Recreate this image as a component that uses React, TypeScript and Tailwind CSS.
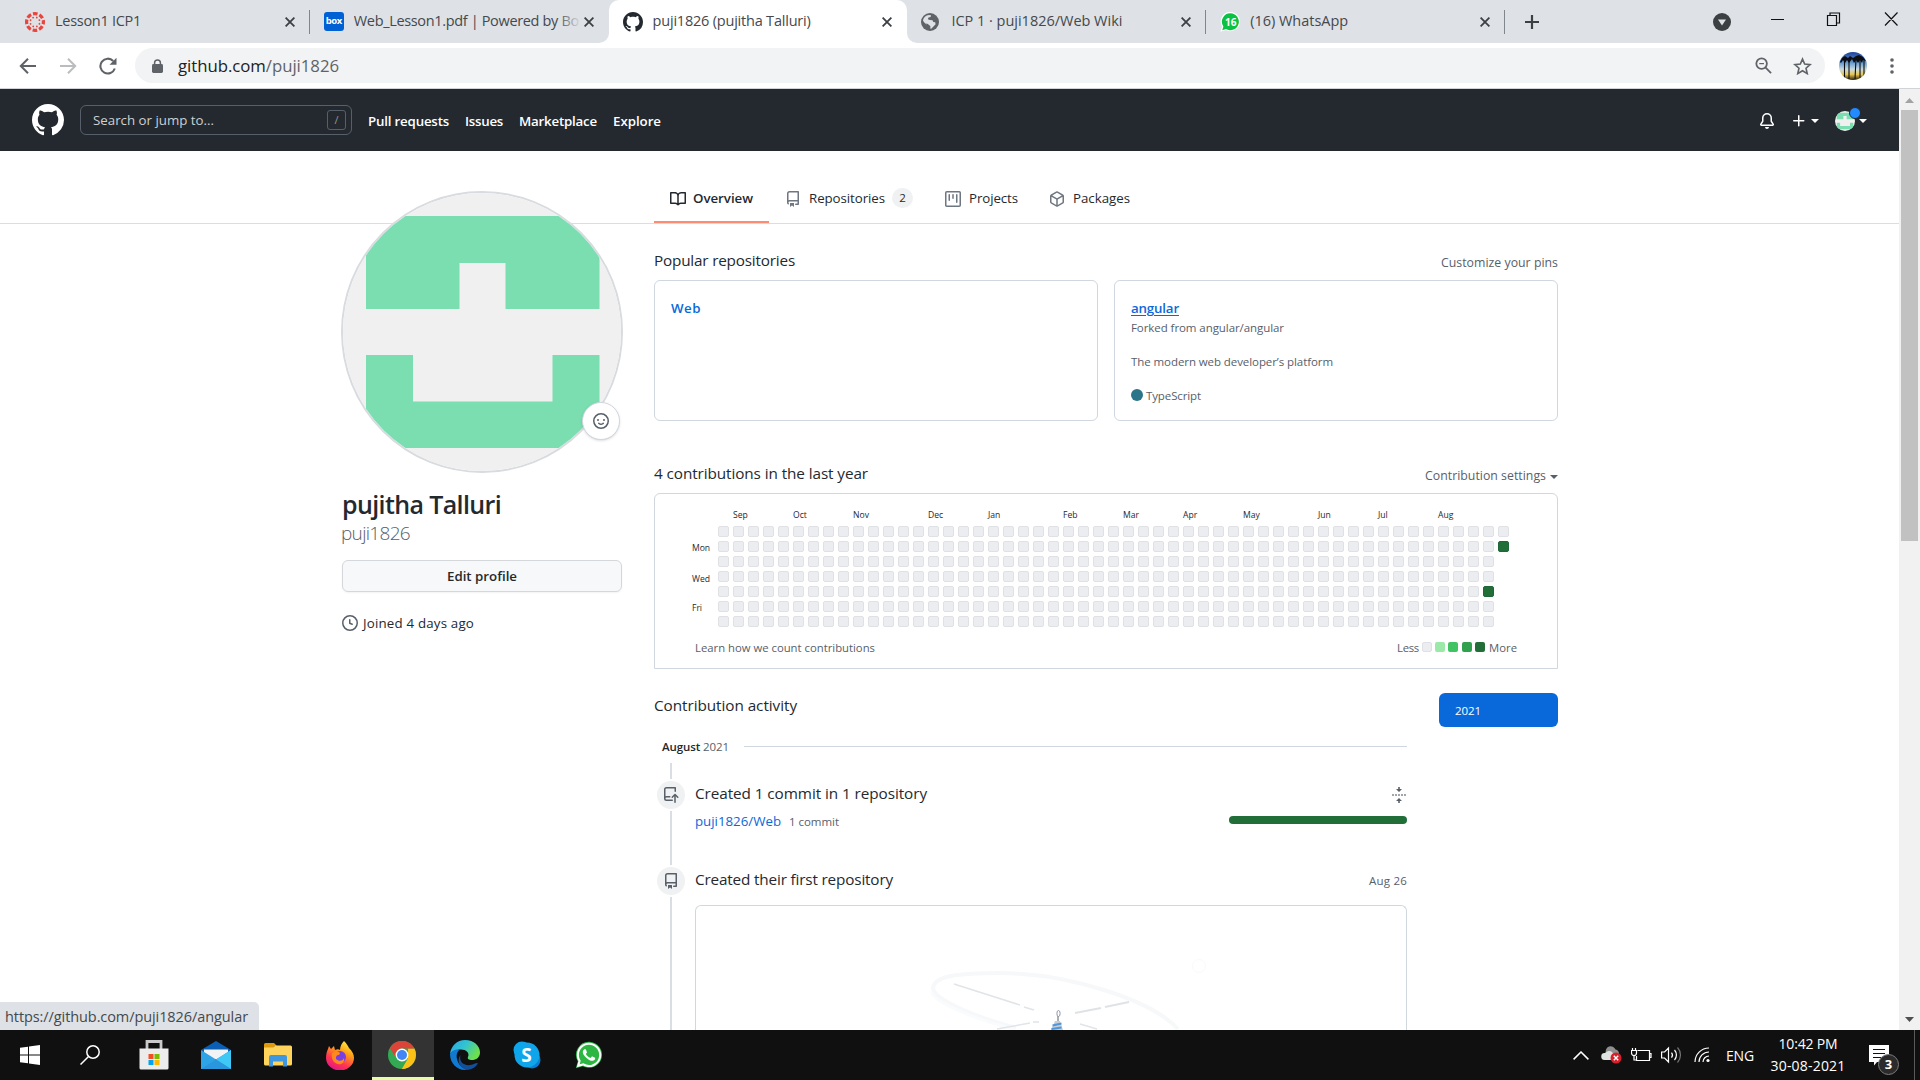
import { useLayoutEffect, useRef, type ReactNode } from "react";
import { FaWhatsapp } from "react-icons/fa";

/** Text that spreads its letters evenly over the width given by its classes. */
function T({ children, className = "" }: { children: ReactNode; className?: string }) {
  const box = useRef<HTMLSpanElement>(null);
  const inner = useRef<HTMLSpanElement>(null);
  useLayoutEffect(() => {
    const b = box.current;
    const i = inner.current;
    if (!b || !i) return;
    i.style.letterSpacing = "0px";
    const n = (i.textContent ?? "").length;
    const diff = b.getBoundingClientRect().width - i.getBoundingClientRect().width;
    i.style.letterSpacing = `${diff / n}px`;
  });
  return (
    <span ref={box} className={`inline-block shrink-0 whitespace-nowrap ${className}`}>
      <span ref={inner}>{children}</span>
    </span>
  );
}

const paths = {
  mark: "M8 0C3.58 0 0 3.58 0 8c0 3.54 2.29 6.53 5.47 7.59.4.07.55-.17.55-.38 0-.19-.01-.82-.01-1.49-2.01.37-2.53-.49-2.69-.94-.09-.23-.48-.94-.82-1.13-.28-.15-.68-.52-.01-.53.63-.01 1.08.58 1.23.82.72 1.21 1.87.87 2.33.66.07-.52.28-.87.51-1.07-1.78-.2-3.64-.89-3.64-3.95 0-.87.31-1.59.82-2.15-.08-.2-.36-1.02.08-2.12 0 0 .67-.21 2.2.82.64-.18 1.32-.27 2-.27.68 0 1.36.09 2 .27 1.53-1.04 2.2-.82 2.2-.82.44 1.1.16 1.92.08 2.12.51.56.82 1.27.82 2.15 0 3.07-1.87 3.75-3.65 3.95.29.25.54.73.54 1.48 0 1.07-.01 1.93-.01 2.2 0 .21.15.46.55.38A8.013 8.013 0 0016 8c0-4.42-3.58-8-8-8z",
  repo: "M2 2.5A2.5 2.5 0 014.5 0h8.75a.75.75 0 01.75.75v12.5a.75.75 0 01-.75.75h-2.5a.75.75 0 110-1.5h1.75v-2h-8a1 1 0 00-.714 1.7.75.75 0 01-1.072 1.05A2.495 2.495 0 012 11.5v-9zm10.5-1V9h-8c-.356 0-.694.074-1 .208V2.5a1 1 0 011-1h8zM5 12.25v3.25a.25.25 0 00.4.2l1.45-1.087a.25.25 0 01.3 0L8.6 15.7a.25.25 0 00.4-.2v-3.25a.25.25 0 00-.25-.25h-3.5a.25.25 0 00-.25.25z",
  book: "M0 1.75A.75.75 0 01.75 1h4.253c1.227 0 2.317.59 3 1.501A3.744 3.744 0 0111.006 1h4.245a.75.75 0 01.75.75v10.5a.75.75 0 01-.75.75h-4.507a2.25 2.25 0 00-1.591.659l-.622.621a.75.75 0 01-1.06 0l-.622-.621A2.25 2.25 0 005.258 13H.75a.75.75 0 01-.75-.75V1.75zm8.755 3a2.25 2.25 0 012.25-2.25H14.5v9h-3.757c-.71 0-1.4.201-1.992.572l.004-7.322zm-1.504 7.324l.004-5.073-.002-2.253A2.25 2.25 0 005.003 2.5H1.5v9h3.757a3.75 3.75 0 011.994.574z",
  project: "M1.75 0A1.75 1.75 0 000 1.75v12.5C0 15.216.784 16 1.75 16h12.5A1.75 1.75 0 0016 14.25V1.75A1.75 1.75 0 0014.25 0H1.75zM1.5 1.75a.25.25 0 01.25-.25h12.5a.25.25 0 01.25.25v12.5a.25.25 0 01-.25.25H1.75a.25.25 0 01-.25-.25V1.75zM11.75 3a.75.75 0 00-.75.75v7.5a.75.75 0 001.5 0v-7.5a.75.75 0 00-.75-.75zm-8.25.75a.75.75 0 011.5 0v5.5a.75.75 0 01-1.5 0v-5.5zM8 3a.75.75 0 00-.75.75v3.5a.75.75 0 001.5 0v-3.5A.75.75 0 008 3z",
  pkg: "M8.878.392a1.75 1.75 0 00-1.756 0l-5.25 3.045A1.75 1.75 0 001 4.951v6.098c0 .624.332 1.2.872 1.514l5.25 3.045a1.75 1.75 0 001.756 0l5.25-3.045c.54-.313.872-.89.872-1.514V4.951c0-.624-.332-1.2-.872-1.514L8.878.392zM7.875 1.69a.25.25 0 01.25 0l4.63 2.685L8 7.133 3.245 4.375l4.63-2.685zM2.5 5.677v5.372c0 .09.047.171.125.216l4.625 2.683V8.432L2.5 5.677zm6.25 8.271l4.625-2.683a.25.25 0 00.125-.216V5.677L8.75 8.432v5.516z",
  smiley: "M1.5 8a6.5 6.5 0 1113 0 6.5 6.5 0 01-13 0zM8 0a8 8 0 100 16A8 8 0 008 0zM5 8a1 1 0 100-2 1 1 0 000 2zm7-1a1 1 0 11-2 0 1 1 0 012 0zM5.32 9.636a.75.75 0 011.038.175l.007.009c.103.118.22.222.35.31.264.178.683.37 1.285.37.602 0 1.02-.192 1.285-.371.13-.088.247-.192.35-.31l.007-.008a.75.75 0 111.222.87l-.614-.431c.614.43.614.431.613.431v.001l-.001.002-.002.003-.005.007-.014.019a1.984 1.984 0 01-.184.213c-.16.166-.338.316-.53.445-.63.418-1.37.638-2.127.629-.946 0-1.652-.308-2.126-.63a3.331 3.331 0 01-.715-.657l-.014-.02-.005-.006-.002-.003v-.002h-.001l.613-.432-.614.43a.75.75 0 01.183-1.044h.001z",
  clock: "M1.5 8a6.5 6.5 0 1113 0 6.5 6.5 0 01-13 0zM8 0a8 8 0 100 16A8 8 0 008 0zm.5 4.75a.75.75 0 00-1.5 0v3.5a.75.75 0 00.471.696l2.5 1a.75.75 0 00.557-1.392L8.5 7.742V4.75z",
  bell: "M8 16a2 2 0 001.985-1.75c.017-.137-.097-.25-.235-.25h-3.5c-.138 0-.252.113-.235.25A2 2 0 008 16zM8 1.5A3.5 3.5 0 004.5 5v2.947c0 .346-.102.683-.294.97l-1.703 2.556a.018.018 0 00-.003.01l.001.006c0 .002.002.004.004.006a.017.017 0 00.006.004l.007.001h10.964l.007-.001a.016.016 0 00.006-.004.016.016 0 00.004-.006l.001-.007a.017.017 0 00-.003-.01l-1.703-2.554a1.75 1.75 0 01-.294-.97V5A3.5 3.5 0 008 1.5zM3 5a5 5 0 0110 0v2.947c0 .05.015.098.042.139l1.703 2.555A1.518 1.518 0 0113.482 13H2.518a1.518 1.518 0 01-1.263-2.36l1.703-2.554A.25.25 0 003 7.947V5z",
  plus: "M7.75 2a.75.75 0 01.75.75V7h4.25a.75.75 0 110 1.5H8.5v4.25a.75.75 0 11-1.5 0V8.5H2.75a.75.75 0 010-1.5H7V2.75A.75.75 0 017.75 2z",
  push: "M1 2.5A2.5 2.5 0 013.5 0h8.75a.75.75 0 01.75.75v3.5a.75.75 0 01-1.5 0V1.5h-8a1 1 0 00-1 1v6.708A2.492 2.492 0 013.5 9h3.25a.75.75 0 010 1.5H3.5a1 1 0 100 2h5.75a.75.75 0 010 1.5H3.5A2.5 2.5 0 011 11.5v-9zM12 16a.75.75 0 01-.75-.75V9.31L9.78 10.78a.75.75 0 01-1.06-1.06l2.75-2.75a.75.75 0 011.06 0l2.75 2.75a.75.75 0 11-1.06 1.06L12.75 9.31v5.94A.75.75 0 0112 16z",
};

function Oct({ d, className = "" }: { d: string; className?: string }) {
  return (
    <svg viewBox="0 0 16 16" fill="currentColor" fillRule="evenodd" className={`h-4 w-4 shrink-0 ${className}`}>
      <path d={d} />
    </svg>
  );
}

function Caret({ className = "" }: { className?: string }) {
  return (
    <svg viewBox="0 0 8 4" fill="currentColor" className={`h-1 w-2 shrink-0 ${className}`}>
      <path d="M0 0h8L4 4z" />
    </svg>
  );
}

/* ---------- Browser chrome ---------- */

const CloseX = () => (
  <svg viewBox="0 0 10 10" className="h-[10px] w-[10px] shrink-0" stroke="#3c4043" strokeWidth="1.8">
    <path d="M.6.6l8.8 8.8M9.4.6L.6 9.4" />
  </svg>
);

const CanvasIcon = () => (
  <svg viewBox="0 0 20 20" className="h-5 w-5 shrink-0" fill="none">
    <circle cx="10" cy="10" r="8.4" stroke="#e8453c" strokeWidth="3.2" strokeDasharray="4.6 2" strokeDashoffset="2.3" />
    {[0, 45, 90, 135, 180, 225, 270, 315].map((a) => (
      <circle key={a} cx="10" cy="5.2" r=".9" fill="#e8453c" transform={`rotate(${a + 22} 10 10)`} />
    ))}
  </svg>
);

const BoxIcon = () => (
  <span className="flex h-[19px] w-5 shrink-0 items-center justify-center rounded-[3px] bg-[#0061d5] pb-[1px] font-['Open_Sans',sans-serif] text-[9.5px] leading-none font-bold tracking-[-0.5px] text-white">
    box
  </span>
);

const GlobeIcon = () => (
  <svg viewBox="0 0 18 18" className="h-[18px] w-[18px] shrink-0">
    <circle cx="9" cy="9" r="9" fill="#5f6368" />
    <path d="M2 7.5C2.4 4.500 5 2 8 1.900L10 2.300 9.600 4 7.500 4.600 6.800 6.300 9 7l2.500.3.800 1.600 1.900.4.400 2L12 14l-1.800 1.800-1-.3.300-2.100-1.600-1.700-2.300-.2L3 9.300z" fill="#dee1e6" />
    <path d="M12.500 3.200l1.500 1-.4 1.500-1.700-.5zM5 10.500l2 .4.700 1.900-1 .7z" fill="#5f6368" />
  </svg>
);

const WaTabIcon = () => (
  <span className="relative flex h-5 w-5 shrink-0 items-center justify-center">
    <svg viewBox="0 0 20 20" className="absolute inset-0 h-5 w-5">
      <path d="M10.500 0a9.600 9.600 0 11-4.600 18.100L.4 19.800l1.700-5.200A9.600 9.600 0 0110.500 0z" fill="#fff" />
      <path d="M10.500 1.200A8.500 8.500 0 116 17l-3.800 1.200 1.200-3.700A8.500 8.500 0 0110.500 1.200z" fill="#0bc144" />
    </svg>
    <span className="relative pl-[1px] text-[10px] leading-none font-bold text-white">16</span>
  </span>
);

function TabCorner({ flip = false }: { flip?: boolean }) {
  return (
    <svg viewBox="0 0 10 10" className={`absolute bottom-0 h-[10px] w-[10px] ${flip ? "-right-[10px] -scale-x-100" : "-left-[10px]"}`}>
      <path d="M10 0v10H0A10 10 0 0010 0z" fill="#fff" />
    </svg>
  );
}

function Tab({ icon, children, active = false, sep = false, fade = false }: { icon: ReactNode; children: ReactNode; active?: boolean; sep?: boolean; fade?: boolean }) {
  return (
    <div className={`relative flex h-[43px] w-[298.800px] shrink-0 items-center pr-[15px] pl-[14px] ${active ? "rounded-t-[10px] bg-white" : ""}`}>
      {active && <TabCorner />}
      {active && <TabCorner flip />}
      <span className="mr-[10px] flex w-5">{icon}</span>
      <span className="relative mb-[2px] flex min-w-0 flex-1 overflow-hidden">
        {children}
        {fade && <span className="absolute top-0 right-0 h-full w-6 bg-linear-to-r from-transparent to-[#dee1e6]" />}
      </span>
      <span className="ml-[3px] flex">
        <CloseX />
      </span>
      {sep && <span className="absolute top-[10px] right-0 h-6 w-px bg-[#80868b]" />}
    </div>
  );
}

function TabStrip() {
  return (
    <div className="flex h-[43px] items-center bg-[#dee1e6] pl-[11px] text-[14.500px] text-[#45494d]">
      <Tab icon={<CanvasIcon />} sep>
        <T className="w-[86px]">Lesson1 ICP1</T>
      </Tab>
      <Tab icon={<BoxIcon />} fade>
        <T className="w-[225px]">Web_Lesson1.pdf | Powered by Bo</T>
      </Tab>
      <Tab icon={<Oct d={paths.mark} className="!h-5 !w-5 text-[#24292f]" />} active>
        <T className="w-[158px]">puji1826 (pujitha Talluri)</T>
      </Tab>
      <Tab icon={<GlobeIcon />} sep>
        <T className="w-[171px]">ICP 1 · puji1826/Web Wiki</T>
      </Tab>
      <Tab icon={<WaTabIcon />} sep>
        <T className="w-[98px]">(16) WhatsApp</T>
      </Tab>
      <svg viewBox="0 0 14 14" className="ml-[20px] h-[14px] w-[14px]" stroke="#3c4043" strokeWidth="2.200">
        <path d="M7 0v14M0 7h14" />
      </svg>
      <svg viewBox="0 0 18 18" className="mr-[40px] ml-auto h-[18px] w-[18px]">
        <circle cx="9" cy="9" r="9" fill="#3c4043" />
        <path d="M5 6.500h8L9 12.500z" fill="#dee1e6" />
      </svg>
      <svg viewBox="0 0 127 14" className="mr-[22px] mb-[6px] h-[14px] w-[127px]" fill="none" stroke="#111" strokeWidth="1.200">
        <path d="M0 7.500h13M56.500 3.500h9v10h-9zM59 3.500v-2.500h9.500v10H66M114 .5l12.500 13M126.500.5L114 13.500" />
      </svg>
    </div>
  );
}

function Toolbar() {
  return (
    <div className="flex h-[46px] items-center border-b border-[#d0d3d7] bg-white pl-[19px]">
      <svg viewBox="0 0 18 16" className="h-4 w-[18px]" fill="none" stroke="#5f6368" strokeWidth="2">
        <path d="M17 8H2M9 .8L1.800 8 9 15.200" />
      </svg>
      <svg viewBox="0 0 18 16" className="ml-[22px] h-4 w-[18px]" fill="none" stroke="#babcbe" strokeWidth="2">
        <path d="M1 8h15M9 .8L16.200 8 9 15.200" />
      </svg>
      <svg viewBox="0 0 18 18" className="ml-[22px] h-[18px] w-[18px]" fill="none" stroke="#5f6368" strokeWidth="2.100">
        <path d="M15.800 11.500A7.400 7.400 0 1114.200 4" />
        <path d="M17.500.8v7h-7z" fill="#5f6368" stroke="none" />
      </svg>
      <div className="ml-[18px] flex h-[35px] w-[1690px] items-center rounded-full bg-[#f1f3f4] pr-[13px] pl-[17px]">
        <svg viewBox="0 0 11 14" className="h-[14px] w-[11px]">
          <path d="M2.600 6V3.800a2.900 2.900 0 015.800 0V6" fill="none" stroke="#5f6368" strokeWidth="1.500" />
          <rect y="5" width="11" height="9" rx="1.400" fill="#5f6368" />
        </svg>
        <T className="ml-[15px] w-[161px] text-[16.800px] leading-[24px] text-[#202124]">
          github.com<span className="text-[#5f6368]">/puji1826</span>
        </T>
        <svg viewBox="0 0 18 18" className="mr-px ml-auto h-[17px] w-[17px]" fill="none" stroke="#5f6368" strokeWidth="1.900">
          <circle cx="7" cy="7" r="5.600" />
          <path d="M11 11l6 6" />
          <path d="M4.500 7h5" strokeWidth="1.300" />
        </svg>
        <svg viewBox="0 0 20 19" className="ml-[20px] h-[18px] w-[19px]" fill="none" stroke="#5f6368" strokeWidth="1.700">
          <path d="M10 2.200l2.300 5.300 5.700.5-4.300 3.800 1.300 5.700-5-3-5 3 1.300-5.700L2 8l5.700-.5z" />
        </svg>
      </div>
      <svg viewBox="0 0 28 28" className="ml-[14px] h-7 w-7">
        <defs>
          <linearGradient id="sky" x1="0" y1="0" x2="0" y2="1">
            <stop offset="0" stopColor="#1d3f9a" />
            <stop offset=".35" stopColor="#5b91cf" />
            <stop offset=".62" stopColor="#c9dbe0" />
            <stop offset=".8" stopColor="#e8c555" />
            <stop offset="1" stopColor="#2c2108" />
          </linearGradient>
          <clipPath id="round">
            <circle cx="14" cy="14" r="14" />
          </clipPath>
        </defs>
        <g clipPath="url(#round)">
          <rect width="28" height="28" fill="url(#sky)" />
          <path d="M5.500 8v20M10 7v20M17 7l-1 20M21 6v20M25 7v18" stroke="#0b0d10" strokeWidth="1.100" fill="none" />
          <path d="M1 10l2-4 3-2 3 2 2-2 3 2 3-2 3-1 4 2 3 4-3-1-1 3-2-3-2 3-2-3-2 3-2-4-3 4-2-3-2 3-2-3-2 3z" fill="#0b0d10" />
        </g>
      </svg>
      <svg viewBox="0 0 4 16" className="ml-[23px] h-4 w-1" fill="#5f6368">
        <circle cx="2" cy="2" r="1.800" />
        <circle cx="2" cy="8" r="1.800" />
        <circle cx="2" cy="14" r="1.800" />
      </svg>
    </div>
  );
}

/* ---------- Site ---------- */

const Identicon = ({ className }: { className: string }) => (
  <svg viewBox="0 0 282 282" className={className}>
    <rect width="282" height="282" fill="#f0f0f0" />
    <path d="M25 25h233.500v93H164.500V72h-46v46H25zM25 164h47v46.500h139.500V164h47v93H25z" fill="#7adeb0" />
  </svg>
);

function SiteHeader() {
  return (
    <header className="flex h-[62px] items-center bg-[#24292f] pl-8 text-[13.300px] font-semibold text-white">
      <Oct d={paths.mark} className="!h-8 !w-8" />
      <div className="ml-4 flex h-[30px] w-[272px] items-center justify-between rounded-md border border-[#57606a] pr-[5px] pl-3 font-normal text-[#cdd0d3]">
        <T className="mt-px w-[121px]">Search or jump to...</T>
        <span className="flex h-5 w-[19px] items-center justify-center rounded-[3px] border border-[#57606a] text-[11px] text-[#8c959f]">/</span>
      </div>
      <nav className="ml-4 flex gap-4 pt-[4px]">
        <T className="w-[81px]">Pull requests</T>
        <T className="w-[38px]">Issues</T>
        <T className="w-[78px]">Marketplace</T>
        <T className="w-[48px]">Explore</T>
      </nav>
      <div className="mr-8 ml-auto flex items-center pt-[2px]">
        <Oct d={paths.bell} />
        <Oct d={paths.plus} className="ml-4" />
        <Caret className="ml-1" />
        <span className="relative ml-4 flex">
          <Identicon className="h-5 w-5 rounded-full" />
          <span className="absolute -top-[4px] -right-[6px] h-3 w-3 rounded-full border border-[#24292f] bg-[#218bff]" />
        </span>
        <Caret className="ml-[4px]" />
      </div>
    </header>
  );
}

function ProfileNav() {
  return (
    <nav className="flex h-[73px] items-end border-b border-[#d8dee4] pl-[654px] text-[13.300px] text-[#24292f]">
      <div className="flex h-[46px] w-[115px] items-start border-b-2 border-[#fd8c73] pl-4">
        <Oct d={paths.book} className="mt-[14px]" />
        <T className="mt-[11px] ml-[7px] w-[60px] leading-5 font-semibold">Overview</T>
      </div>
      <div className="ml-4 flex h-[46px] items-start">
        <Oct d={paths.repo} className="mt-[14px] text-[#6e7781]" />
        <T className="mt-[11px] ml-2 w-[76px] leading-5">Repositories</T>
        <span className="mt-[11px] ml-[7px] flex h-5 w-[21px] items-center justify-center rounded-full bg-[#eff1f3] text-[11.500px] font-medium">2</span>
      </div>
      <div className="ml-8 flex h-[46px] items-start">
        <Oct d={paths.project} className="mt-[14px] text-[#6e7781]" />
        <T className="mt-[11px] ml-2 w-[49px] leading-5">Projects</T>
      </div>
      <div className="ml-[31px] flex h-[46px] items-start">
        <Oct d={paths.pkg} className="mt-[14px] text-[#6e7781]" />
        <T className="mt-[11px] ml-2 w-[57px] leading-5">Packages</T>
      </div>
    </nav>
  );
}

function ProfileCard() {
  return (
    <aside className="relative -mt-[33px] flex w-[282px] shrink-0 flex-col text-[#24292f]">
      <div className="relative h-[282px] w-[282px]">
        <div className="h-full w-full overflow-hidden rounded-full border-2 border-[#d8dbdf]">
          <Identicon className="-m-[2px] h-[282px] w-[282px] max-w-none" />
        </div>
        <span className="absolute top-[211px] left-[241px] flex h-[38px] w-[38px] items-center justify-center rounded-full border border-[#d0d7de] bg-white text-[#57606a] shadow-sm">
          <Oct d={paths.smiley} />
        </span>
      </div>
      <T className="mt-[15px] ml-px w-[159px] text-[25px] leading-[32px] font-semibold">pujitha Talluri</T>
      <T className="mt-px w-[69px] text-[19px] leading-[24px] font-light text-[#57606a]">puji1826</T>
      <button className="mt-[15px] ml-px flex h-8 w-[280px] items-center justify-center rounded-md border border-[#d5d8da] bg-[#f6f8fa] text-[13.300px] font-semibold shadow-xs">
        <T className="mt-[2px] w-[70px]">Edit profile</T>
      </button>
      <div className="mt-[21px] ml-px flex h-5 items-center text-[13.300px]">
        <Oct d={paths.clock} className="text-[#57606a]" />
        <T className="mt-[2px] ml-[5px] w-[111px]">Joined 4 days ago</T>
      </div>
    </aside>
  );
}

const months: [string, number][] = [
  ["Sep", 2], ["Oct", 6], ["Nov", 10], ["Dec", 15], ["Jan", 19], ["Feb", 24],
  ["Mar", 28], ["Apr", 32], ["May", 36], ["Jun", 41], ["Jul", 45], ["Aug", 49],
];

function Calendar() {
  return (
    <div className="mt-2 h-[176px] rounded-t-md border border-[#d0d7de] pl-[37px]">
      <div className="mt-[13px] ml-[26px] grid h-4 grid-cols-[repeat(53,11px)] gap-1 text-[8.600px] leading-4 text-[#24292f]">
        {months.map(([m, c]) => (
          <span key={m} className="row-start-1 whitespace-nowrap" style={{ gridColumnStart: c }}>
            {m}
          </span>
        ))}
      </div>
      <div className="mt-[3px] flex h-[101px]">
        <div className="flex w-[26px] flex-col text-[8.600px] leading-4 text-[#24292f]">
          <T className="mt-[14px] w-[18px]">Mon</T>
          <T className="mt-[15px] w-[18px]">Wed</T>
          <T className="mt-[13px] w-[10px]">Fri</T>
        </div>
        <div className="grid grid-flow-col grid-rows-[repeat(7,11px)] gap-1">
          {Array.from({ length: 366 }, (_, i) => (
            <span
              key={i}
              className={`h-[11px] w-[11px] rounded-[2px] border ${i === 361 || i === 365 ? "border-[#1f6736] bg-[#216e39]" : "border-[#e0e1e4] bg-[#ebedf0]"}`}
            />
          ))}
        </div>
      </div>
      <div className="mt-[13px] mr-[40px] ml-[3px] flex h-4 items-center justify-between text-[11.300px] text-[#57606a]">
        <T className="w-[180px]">Learn how we count contributions</T>
        <div className="flex items-center gap-[3px]">
          <T className="w-[22px]">Less</T>
          <span className="mb-[2px] h-[10px] w-[10px] rounded-[2px] border border-[#e0e1e4] bg-[#ebedf0]" />
          <span className="mb-[2px] h-[10px] w-[10px] rounded-[2px] bg-[#9be9a8]" />
          <span className="mb-[2px] h-[10px] w-[10px] rounded-[2px] bg-[#40c463]" />
          <span className="mb-[2px] ml-px h-[10px] w-[10px] rounded-[2px] bg-[#30a14e]" />
          <span className="mb-[2px] h-[10px] w-[10px] rounded-[2px] bg-[#216e39]" />
          <T className="ml-px w-[28px]">More</T>
        </div>
      </div>
    </div>
  );
}

function RailBadge({ d }: { d: string }) {
  return (
    <span className="my-[2px] flex h-7 w-7 shrink-0 items-center justify-center rounded-full bg-[#eff1f3] text-[#57606a]">
      <Oct d={d} />
    </span>
  );
}

function Illustration() {
  return (
    <svg viewBox="0 0 710 124" className="h-[124px] w-[710px]" fill="none">
      <path d="M320 122C275 110 238 93 237 82C238 70 262 67 305 67C375 68 455 94 482 123" stroke="#f6f8fa" strokeWidth="4" />
      <path d="M320 124C275 112 236 95 236 86" stroke="#fafbfc" strokeWidth="3" />
      <path d="M258 78l66 21M328 101l10 3" stroke="#e1e4e9" strokeWidth="1.500" />
      <path d="M379 107l26-5M409 101l24-5" stroke="#dfe3e8" strokeWidth="2" />
      <path d="M301 123l33-6M337 116l6 0M384 118l17 5" stroke="#e1e4e9" strokeWidth="1.500" />
      <circle cx="503" cy="60" r="6.500" stroke="#f9fafb" />
      <ellipse cx="362.500" cy="107.500" rx="1.600" ry="3" stroke="#8c959f" />
      <path d="M362 110v6" stroke="#8c959f" strokeWidth="1.500" />
      <path d="M359 115h5l3 9h-12z" fill="#c6cdd4" />
      <path d="M356.500 119.500l9-2M355.500 123l10-1.500" stroke="#4f97dc" strokeWidth="2" />
    </svg>
  );
}

function Overview() {
  return (
    <main className="ml-[31px] w-[904px] shrink-0 text-[15.300px] text-[#24292f]">
      <div className="mt-[25px] flex h-6 items-center justify-between">
        <T className="mb-[2px] w-[141px]">Popular repositories</T>
        <T className="mt-[5px] w-[117px] text-[12.300px] text-[#57606a]">Customize your pins</T>
      </div>
      <div className="mt-[7px] grid grid-cols-2 gap-4">
        <div className="flex h-[141px] flex-col rounded-md border border-[#d0d7de] px-4 pt-[17px]">
          <T className="w-[30px] text-[13.300px] leading-5 font-semibold text-[#0969da]">Web</T>
        </div>
        <div className="flex h-[141px] flex-col rounded-md border border-[#d0d7de] px-4 pt-[17px] text-[11.500px] leading-4 text-[#57606a]">
          <T className="w-[48px] text-[13.300px] leading-5 font-semibold text-[#0969da] underline underline-offset-2">angular</T>
          <T className="mt-[2px] w-[153px]">Forked from angular/angular</T>
          <T className="mt-[18px] w-[202px]">The modern web developer’s platform</T>
          <div className="mt-[18px] flex items-center">
            <span className="mr-[3px] mb-[2px] h-3 w-3 rounded-full bg-[#2b7489]" />
            <T className="w-[55px]">TypeScript</T>
          </div>
        </div>
      </div>
      <div className="mt-10 flex h-6 items-center justify-between">
        <T className="w-[214px]">4 contributions in the last year</T>
        <span className="mt-[6px] flex items-center text-[12.300px] text-[#57606a]">
          <T className="mr-1 w-[121px]">Contribution settings</T>
          <Caret className="mt-[2px]" />
        </span>
      </div>
      <Calendar />
      <div className="mt-6 flex items-start justify-between">
        <section className="w-[753px]">
          <div className="flex h-[26px] items-center">
            <T className="mb-[2px] w-[143px]">Contribution activity</T>
          </div>
          <div className="mt-5 flex h-4 items-center pl-2 text-[11.500px]">
            <T className="w-[67px] font-semibold">
              August <span className="font-normal text-[#57606a]">2021</span>
            </T>
            <span className="mb-px ml-[15px] h-px flex-1 bg-[#d0d7de]" />
          </div>
          <div className="mt-2 flex pl-[3px]">
            <div className="flex h-[267px] w-7 flex-col items-center">
              <span className="h-4 w-[2px] bg-[#d8dee4]" />
              <RailBadge d={paths.push} />
              <span className="h-[54px] w-[2px] bg-[#d8dee4]" />
              <RailBadge d={paths.repo} />
              <span className="w-[2px] flex-1 bg-[#d8dee4]" />
            </div>
            <div className="ml-[10px] w-[712px]">
              <div className="mt-[19px] flex h-6 items-center justify-between">
                <T className="mb-[2px] w-[232px]">Created 1 commit in 1 repository</T>
                <svg viewBox="0 0 14 16" className="mt-[2px] mr-px h-4 w-[14px]" fill="#57606a">
                  <path d="M6.200 0h1.600v2H10L7 5 4 2h2.200zM6.200 16h1.600v-2H10L7 11l-3 3h2.200z" />
                  <path d="M0 7.200h2v1.600H0zM3 7.200h2v1.600H3zM6 7.200h2v1.600H6zM9 7.200h2v1.600H9zM12 7.200h2v1.600h-2z" fillOpacity=".75" />
                </svg>
              </div>
              <div className="mt-[6px] flex h-5 items-center">
                <T className="w-[86px] text-[13.300px] text-[#0969da]">puji1826/Web</T>
                <T className="ml-[8px] w-[50px] text-[11.500px] text-[#57606a]">1 commit</T>
                <span className="mb-1 ml-auto h-2 w-[178px] rounded-full bg-[#216e39]" />
              </div>
              <div className="mt-9 flex h-6 items-center justify-between">
                <T className="mb-[2px] w-[198px]">Created their first repository</T>
                <T className="mt-[2px] w-[38px] text-[11.500px] text-[#57606a]">Aug 26</T>
              </div>
              <div className="mt-[13px] rounded-t-md border border-b-0 border-[#d0d7de]">
                <Illustration />
              </div>
            </div>
          </div>
        </section>
        <div className="flex h-[34px] w-[119px] items-center rounded-md bg-[#0969da] pt-px pl-4 text-[11.500px] text-white">
          <T className="w-[26px]">2021</T>
        </div>
      </div>
    </main>
  );
}

function Scrollbar() {
  return (
    <div className="flex h-full w-[21px] shrink-0 flex-col items-center bg-[#f1f1f1]">
      <svg viewBox="0 0 9 5" className="mt-[9px] h-[5px] w-[9px]" fill="#a3a3a3">
        <path d="M4.500 0L9 5H0z" />
      </svg>
      <span className="mt-[7px] h-[431px] w-[17px] bg-[#c1c1c1]" />
      <svg viewBox="0 0 9 5" className="mt-auto mb-2 h-[5px] w-[9px]" fill="#505050">
        <path d="M0 0h9L4.500 5z" />
      </svg>
    </div>
  );
}

/* ---------- Taskbar ---------- */

const Slot = ({ children, active = false }: { children: ReactNode; active?: boolean }) => (
  <div className={`flex h-[50px] w-[62px] shrink-0 items-center justify-center ${active ? "border-b-[3px] border-[#e3ffa3] bg-[#333] pt-[3px]" : ""}`}>{children}</div>
);

function TaskIcons() {
  return (
    <>
      <Slot>
        <svg viewBox="0 0 20 20" className="mr-[2px] h-5 w-5" fill="#fff">
          <path d="M0 2.800l8-1.100v7.800H0zM9 1.500L20 0v9.500H9zM0 10.500h8v7.800l-8-1.100zM9 10.500h11V20L9 18.500z" />
        </svg>
      </Slot>
      <Slot>
        <svg viewBox="0 0 20 20" className="mr-[6px] h-5 w-5" fill="none" stroke="#fff" strokeWidth="1.500">
          <circle cx="13" cy="7" r="6.200" />
          <path d="M8.500 11.500L.5 19.500" />
        </svg>
      </Slot>
      <Slot>
        <svg viewBox="0 0 30 30" className="mr-[3px] h-[30px] w-[30px]">
          <path d="M8 9V1.500h14V9" fill="none" stroke="#c9c9c9" strokeWidth="2.800" />
          <path d="M.5 8.500h29V28a1.500 1.500 0 01-1.500 1.500H2A1.500 1.500 0 01.5 28z" fill="#ececec" />
          <path d="M9.500 14h5v5h-5z" fill="#f25022" />
          <path d="M15.500 14h5v5h-5z" fill="#7fba00" />
          <path d="M9.500 20h5v5h-5z" fill="#00a4ef" />
          <path d="M15.500 20h5v5h-5z" fill="#ffb900" />
        </svg>
      </Slot>
      <Slot>
        <svg viewBox="0 0 30 28" className="mr-[2px] h-7 w-[30px]">
          <path d="M0 9L15 0l15 9-15 11z" fill="#0a5fb4" />
          <path d="M3 8.500h24V18H3z" fill="#f1f3f5" />
          <path d="M0 9l15 9.500L30 9v19H0z" fill="#2ea3e6" />
          <path d="M15 18.500L30 9v19z" fill="#3fc8f5" />
          <path d="M0 28l15-9.500L30 28z" fill="#2a96de" />
        </svg>
      </Slot>
      <Slot>
        <svg viewBox="0 0 28 24" className="mr-[2px] h-6 w-7">
          <path d="M0 1.500A1.500 1.500 0 011.500 0H10l3 3h-2L9 5H0z" fill="#dd9a0c" />
          <path d="M0 4.500h9l2.500-2H26.500A1.500 1.500 0 0128 4v17a1.500 1.500 0 01-1.500 1.500h-25A1.500 1.500 0 010 21z" fill="#ffd35c" />
          <path d="M5 23.500V14a2 2 0 012-2h14a2 2 0 012 2v9.500h-4V18.500H9v5z" fill="#3f97e0" />
        </svg>
      </Slot>
      <Slot>
        <svg viewBox="0 0 28 29" className="mr-[2px] h-[29px] w-7">
          <defs>
            <linearGradient id="fx" x1=".8" y1="0" x2=".3" y2="1">
              <stop offset="0" stopColor="#fff24a" />
              <stop offset=".35" stopColor="#ffa216" />
              <stop offset=".7" stopColor="#ff3750" />
              <stop offset="1" stopColor="#e31587" />
            </linearGradient>
          </defs>
          <path d="M18 0c3 3 4 5 5 7 3 3 5 6 5 10A14 12.500 0 010 17c0-4 1-7 2-9l1-3 2 3 3-3 1 4c2-1 4-1 5 0 0-4 2-7 4-9z" fill="url(#fx)" />
          <circle cx="14" cy="16" r="6" fill="#7a3fe0" />
          <path d="M6 12c3-2 6-2 8 0l-1 2c-3 0-3 2-3 4 3 3 7 2 8-1 1 5-3 7-6 6-5-1-7-6-6-11z" fill="#ff8a1c" />
        </svg>
      </Slot>
      <Slot active>
        <svg viewBox="0 0 28 28" className="mr-[2px] h-7 w-7">
          <circle cx="14" cy="14" r="14" fill="#34a853" />
          <path d="M14 14h12.600A14 14 0 0114 28l6-10.500z" fill="#fbc116" />
          <path d="M14 28l6.200-10.500L20 7.600h6.400A14 14 0 0114 28z" fill="#fbc116" />
          <path d="M1.900 7A14 14 0 0126.400 7.600H14a6.400 6.400 0 00-6 4.200L6.500 14.500z" fill="#db4437" />
          <circle cx="14" cy="14" r="6.400" fill="#fff" />
          <circle cx="14" cy="14" r="5" fill="#4285f4" />
        </svg>
      </Slot>
      <Slot>
        <svg viewBox="0 0 30 30" className="mr-px h-[30px] w-[30px]">
          <defs>
            <linearGradient id="eg" x1="0" y1="0" x2="1" y2=".5">
              <stop offset="0" stopColor="#2aa5e8" />
              <stop offset=".5" stopColor="#31c3d3" />
              <stop offset="1" stopColor="#6ee04c" />
            </linearGradient>
          </defs>
          <path d="M0 14C1 6 7 0 15 0c9 0 15 6 15 12.500 0 5-4 7.500-8 7.500-3 0-5-1-4-3 2-4-2-7.500-7-7.500C6 9.500 1 12 0 14z" fill="url(#eg)" />
          <path d="M0 14c1-3 5-5 9.500-4.500C7 12 6 15 7 19c1 5 5 9 10 10.800C8 31 0 24 0 14z" fill="#1179d0" />
          <path d="M10.500 15c-2 7 4 12 12 9.500 2-.7 4-2 5-1.500 1 .5-3 6.500-10.500 7-7-2-11-9-6.500-15z" fill="#12509c" />
        </svg>
      </Slot>
      <Slot>
        <span className="relative mr-px flex h-7 w-7 items-center justify-center">
          <svg viewBox="0 0 28 28" className="absolute inset-0 h-7 w-7" fill="#0fa5ea">
            <circle cx="9" cy="9" r="8.500" />
            <circle cx="19" cy="19" r="8.500" fill="#0a7ed4" />
            <circle cx="14" cy="14" r="12.500" />
          </svg>
          <span className="relative text-[19px] leading-none font-bold text-white">S</span>
        </span>
      </Slot>
      <Slot>
        <span className="relative flex h-7 w-7 items-center justify-center">
          <svg viewBox="0 0 28 28" className="absolute inset-0 h-7 w-7">
            <path d="M14.300.8a13 13 0 11-6.500 24.400L.8 27.200l2-6.800A13 13 0 0114.300.8z" fill="#2cb742" />
          </svg>
          <FaWhatsapp className="relative h-7 w-7 text-white" />
        </span>
      </Slot>
    </>
  );
}

function Tray() {
  return (
    <div className="ml-auto flex h-full items-center text-white">
      <svg viewBox="0 0 16 9" className="h-[9px] w-4" fill="none" stroke="#fff" strokeWidth="1.500">
        <path d="M.6 8.400L8 1l7.400 7.400" />
      </svg>
      <svg viewBox="0 0 21 18" className="ml-3 h-[18px] w-[21px]">
        <path d="M5 7a5 5 0 019.500-3.500A4.500 4.500 0 0118 8l-6 3z" fill="#8f8f8f" />
        <path d="M3.500 14a3.500 3.500 0 01.5-7 5 5 0 018.500 1l3 6z" fill="#e2e2e2" />
        <circle cx="15" cy="12" r="5.500" fill="#d6202b" />
        <path d="M12.800 9.800l4.400 4.400M17.200 9.800l-4.400 4.400" stroke="#fff" strokeWidth="1.400" />
      </svg>
      <svg viewBox="0 0 21 14" className="ml-[9px] h-[14px] w-[21px]" fill="none" stroke="#fff" strokeWidth="1.200">
        <path d="M6.500 2.500h12v10h-13V8M18.500 5.500h1.500v4h-1.500M1.500 0v2.500M4.500 0v2.500M.5 2.500h5v2.500a2.500 2.500 0 01-5 0zM3 7.500V12h3" />
      </svg>
      <svg viewBox="0 0 21 18" className="ml-[9px] h-[18px] w-[21px]" fill="none" stroke="#fff" strokeWidth="1.200">
        <path d="M.6 6h3L7.500 2v14L3.600 12h-3zM10.500 6.500a4 4 0 010 5M13.500 4a7.500 7.500 0 010 10" />
        <path d="M16.500 1.500a11 11 0 010 15" stroke="#777" />
      </svg>
      <svg viewBox="0 0 16 16" className="ml-3 h-4 w-4" fill="none" stroke="#fff" strokeWidth="1.200">
        <path d="M15 1A14 14 0 001 15M15 5A10 10 0 005 15M15 9a6 6 0 00-6 6" />
        <circle cx="14" cy="13.500" r="1.600" fill="#fff" stroke="none" />
      </svg>
      <T className="ml-4 w-[28px] text-[14px]">ENG</T>
      <div className="ml-4 flex w-[76px] flex-col items-center text-[14px] leading-[22px]">
        <T className="w-[59px]">10:42 PM</T>
        <T className="w-[75px]">30-08-2021</T>
      </div>
      <span className="relative ml-[23px] h-[21px] w-[30px]">
        <svg viewBox="0 0 20 21" className="h-[21px] w-5">
          <path d="M0 0h20v17H8l-3 3.500V17H0z" fill="#fff" />
          <path d="M4 4.500h12M4 8.500h12M4 12.500h8" stroke="#101010" strokeWidth="1.200" />
        </svg>
        <span className="absolute top-[9px] left-[9px] flex h-[21px] w-[21px] items-center justify-center rounded-full border border-[#7c7c7c] bg-[#2b2b2b] text-[13px] leading-none font-bold">3</span>
      </span>
      <span className="mr-[5px] ml-[15px] h-full w-px bg-[#5a5a5a]" />
    </div>
  );
}

export default function App() {
  return (
    <div className="flex h-[1080px] w-[1920px] flex-col overflow-hidden bg-white font-['Open_Sans','Noto_Sans',sans-serif]">
      <TabStrip />
      <Toolbar />
      <div className="relative flex h-[941px] overflow-hidden">
        <div className="h-full w-[1899px] shrink-0 overflow-hidden">
          <SiteHeader />
          <ProfileNav />
          <div className="flex pl-[341px]">
            <ProfileCard />
            <Overview />
          </div>
        </div>
        <Scrollbar />
        <div className="absolute bottom-0 left-0 flex h-7 w-[259px] items-center rounded-tr-[5px] bg-[#dee1e6] pt-px pl-[5px] text-[14.500px] text-[#45494d]">
          <T className="w-[243px]">https://github.com/puji1826/angular</T>
        </div>
      </div>
      <div className="flex h-[50px] items-center bg-[#101010]">
        <TaskIcons />
        <Tray />
      </div>
    </div>
  );
}
